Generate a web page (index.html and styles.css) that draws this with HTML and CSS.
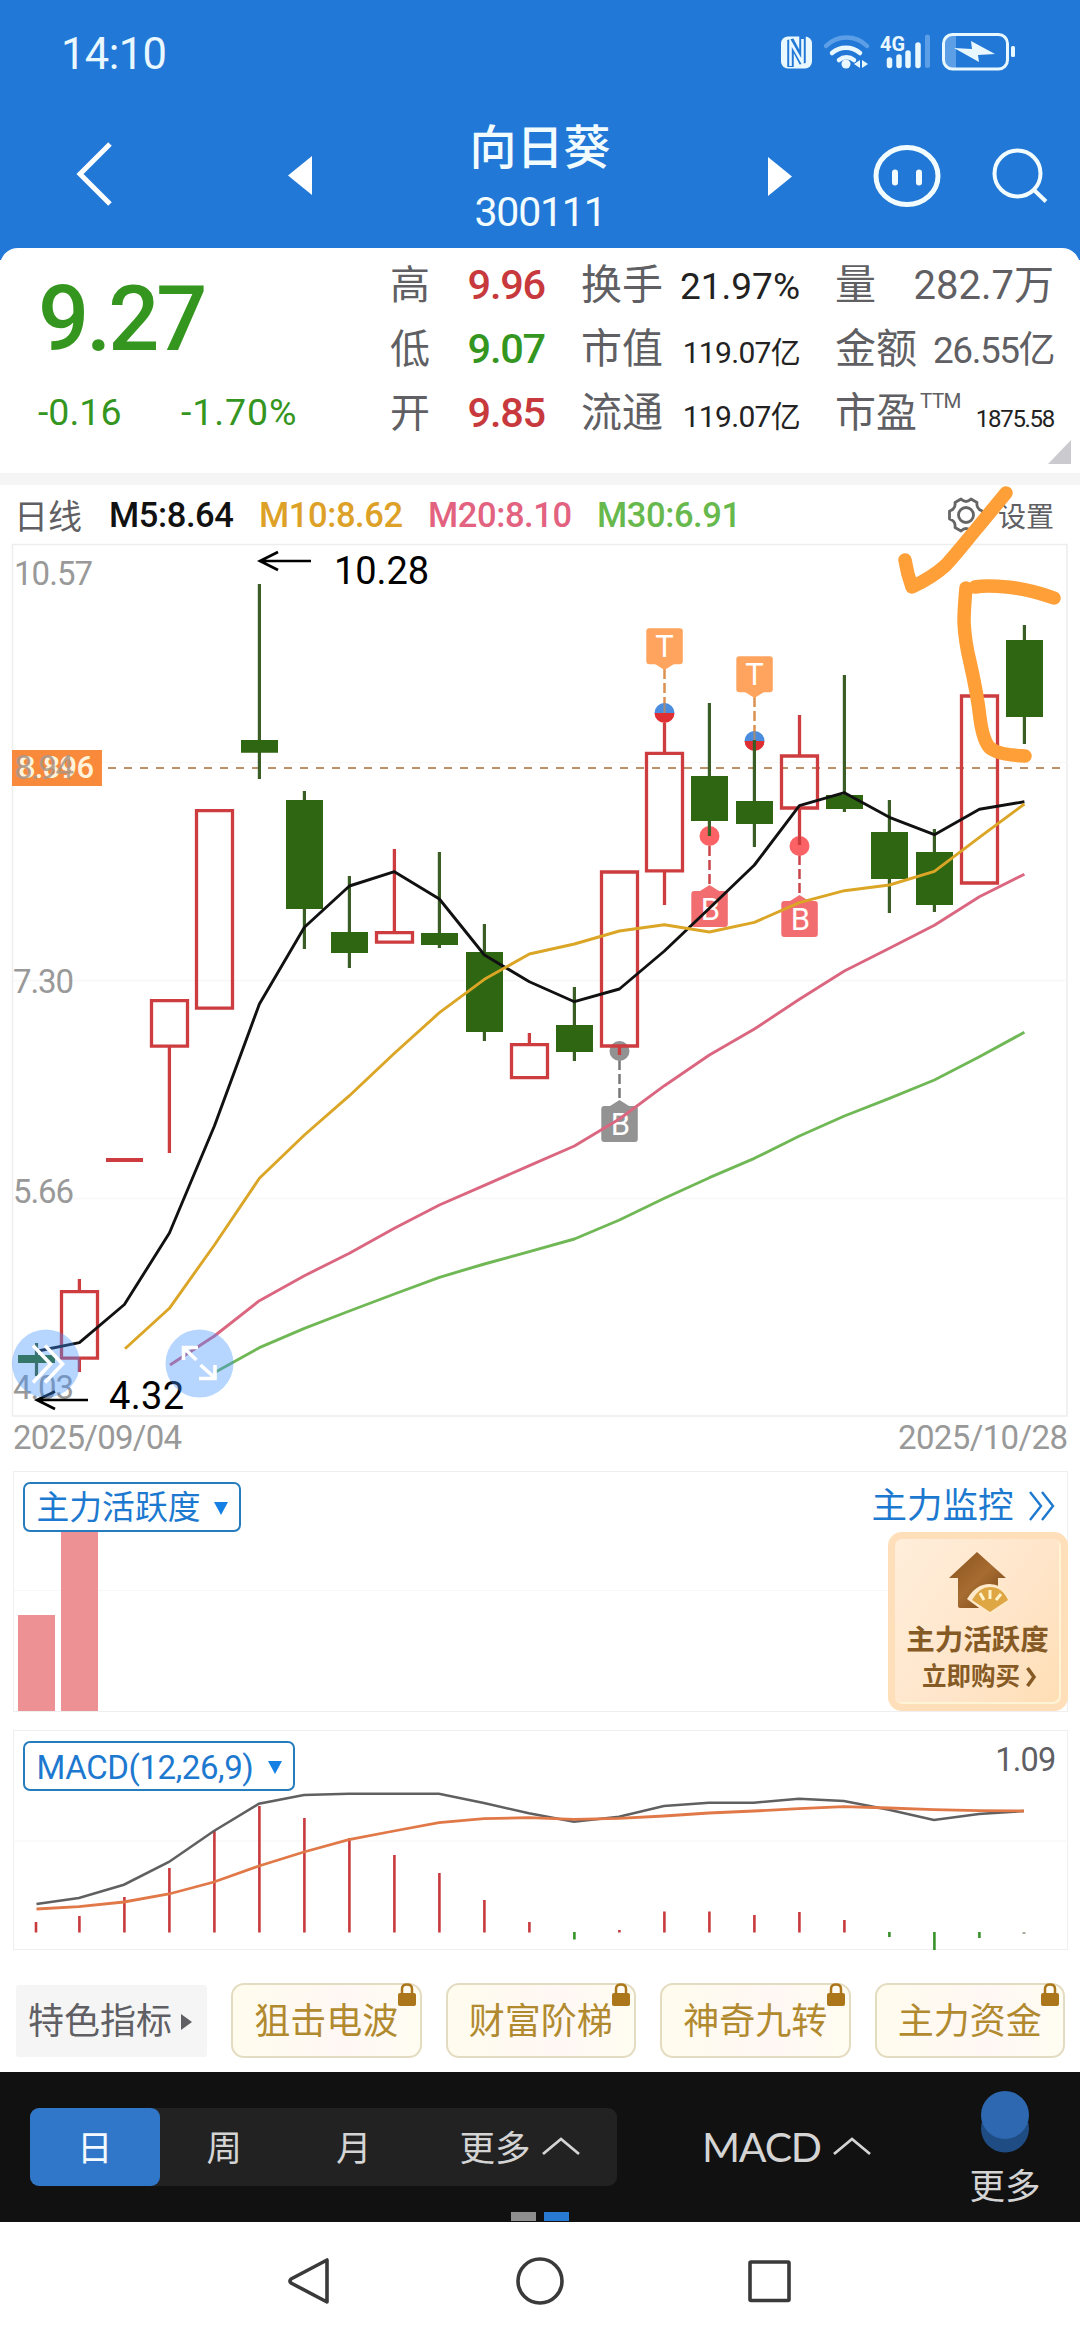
FILE: index.html
```html
<!DOCTYPE html>
<html lang="zh-CN">
<head>
<meta charset="utf-8">
<title>向日葵 300111</title>
<link rel="stylesheet" href="styles.css">
</head>
<body>
<div class="screen">
  <header class="top">
    <div class="status">
      <span class="clock">14:10</span>
      <svg class="status-icons" width="240" height="50" viewBox="776 28 240 50">
        <rect x="781" y="36.500" width="31" height="32" rx="7" fill="#e9f7ff"/>
        <path d="M790.500 67V40L802.500 63V36" fill="none" stroke="#2178d6" stroke-width="6.500"/>
        <path d="M790.500 66V42L802.500 63V39" fill="none" stroke="#e9f7ff" stroke-width="2.600"/>
        <path d="M826 46A29 29 0 0 1 867 46" fill="none" stroke="#5c9fe6" stroke-width="4.500" stroke-linecap="round"/>
        <path d="M832 53A21 21 0 0 1 860 53M839 60A12 12 0 0 1 854 60" fill="none" stroke="#e9f7ff" stroke-width="4.500" stroke-linecap="round"/>
        <circle cx="846" cy="64" r="4.500" fill="#e9f7ff"/>
        <path d="M860 60V68L854 64ZM862 60V68L868 64Z" fill="#e9f7ff"/>
        <text x="880" y="51" class="net" textLength="25" lengthAdjust="spacingAndGlyphs">4G</text>
        <path d="M889.500 60V65.500M899 57V65.500M908 53V65.500M918 45V65.500" stroke="#e9f7ff" stroke-width="5.500" stroke-linecap="round"/>
        <path d="M927.500 37V65.500" stroke="#5c9fe6" stroke-width="5" stroke-linecap="round"/>
        <path d="M951 35H956V68H951Q944 68 944 61V42Q944 35 951 35Z" fill="#5c9fe6"/>
        <rect x="943.500" y="34.500" width="64" height="34.500" rx="9" fill="none" stroke="#e9f7ff" stroke-width="3"/>
        <path d="M954 48L972 49L971 41L995 54L978 55L979 62Z" fill="#e9f7ff"/>
        <rect x="1011" y="46" width="4" height="11" rx="1.500" fill="#e9f7ff"/>
      </svg>
    </div>
    <div class="titlebar">
      <svg class="bar-icons" width="330" height="100" viewBox="0 120 330 100">
        <path d="M110 144L80 174L110 204" fill="none" stroke="#fff" stroke-width="5"/>
        <path d="M312 156V195L288 175.500Z" fill="#fff"/>
      </svg>
      <div class="title"><div class="name">向日葵</div><div class="code">300111</div></div>
      <svg class="bar-icons" width="330" height="100" viewBox="750 120 330 100">
        <path d="M768 157V196L792 176.500Z" fill="#fff"/>
        <ellipse cx="907" cy="176" rx="31" ry="28.500" fill="none" stroke="#f2fcff" stroke-width="5"/>
        <path d="M895 172.500V182.500M919 172.500V182.500" stroke="#f2fcff" stroke-width="6" stroke-linecap="round"/>
        <circle cx="1017.500" cy="173.500" r="23" fill="none" stroke="#f2fcff" stroke-width="4"/>
        <path d="M1033.500 189.500L1046 201.500" stroke="#f2fcff" stroke-width="4"/>
      </svg>
    </div>
  </header>

  <section class="quote">
    <div class="price-box">
      <div class="price">9.27</div>
      <div class="change"><span class="delta">-0.16</span><span class="pct">-1.70%</span></div>
    </div>
    <dl class="stats col-a">
      <div><dt>高</dt><dd class="up">9.96</dd></div>
      <div><dt>低</dt><dd class="down">9.07</dd></div>
      <div><dt>开</dt><dd class="up">9.85</dd></div>
    </dl>
    <dl class="stats col-b">
      <div><dt>换手</dt><dd class="rate">21.97%</dd></div>
      <div><dt>市值</dt><dd>119.07亿</dd></div>
      <div><dt>流通</dt><dd>119.07亿</dd></div>
    </dl>
    <dl class="stats col-c">
      <div><dt>量</dt><dd class="vol">282.7万</dd></div>
      <div><dt>金额</dt><dd class="amount">26.55亿</dd></div>
      <div><dt>市盈<sup>TTM</sup></dt><dd class="pe">1875.58</dd></div>
    </dl>
    <span class="corner"></span>
  </section>

  <section class="ma-row">
    <span class="period">日线</span>
    <span class="ma m5">M5:8.64</span><span class="ma m10">M10:8.62</span><span class="ma m20">M20:8.10</span><span class="ma m30">M30:6.91</span>
    <span class="settings">
      <svg width="38" height="38" viewBox="-19 -19 38 38" fill="none" stroke="#666" stroke-width="2.800" stroke-linejoin="round">
        <path d="M-5 -16Q0 -11 5 -16L11 -12.500Q10 -6 16.500 -4V4Q10 6 11 12.500L5 16Q0 11 -5 16L-11 12.500Q-10 6 -16.500 4V-4Q-10 -6 -11 -12.500Z"/>
        <circle r="7.500"/>
      </svg>设置
    </span>
  </section>

  <section class="kline">
    <svg width="1080" height="922" viewBox="0 542 1080 922">
      <g fill="none" stroke="#ededed" stroke-width="1.500">
        <rect x="12.500" y="544.500" width="1054.500" height="871.500"/>
        <path stroke="#f7f7f7" d="M13 762.500H1067M13 980.500H1067M13 1198.500H1067"/>
      </g>
      <path d="M108 768H1062" stroke="#bd9068" stroke-width="2" stroke-dasharray="8 8"/>
      <rect x="12" y="750" width="90" height="36" fill="#f98a3c"/>
      <text class="tag-price" x="18" y="777.500" textLength="76">8.896</text>
      <g class="axis">
        <text x="14" y="585" textLength="79">10.57</text>
        <text x="14" y="779" textLength="60" class="faded">8.94</text>
        <text x="13" y="993" textLength="61">7.30</text>
        <text x="13" y="1203" textLength="61">5.66</text>
        <text x="13" y="1399" textLength="61">4.03</text>
        <text x="13" y="1449" textLength="169">2025/09/04</text>
        <text x="898" y="1449" textLength="170">2025/10/28</text>
      </g>
      <g class="marker-line">
        <path d="M664.500 669V713M754.500 697V741" stroke="#dc9150"/>
        <path d="M709.500 846V887M799.500 855V897" stroke="#c9444a"/>
        <path d="M619.500 1060V1102" stroke="#777"/>
      </g>
      <g>
        <path d="M654.500 713a10 10 0 0 1 20 0ZM744.500 741a10 10 0 0 1 20 0Z" fill="#4a8cdd"/>
        <path d="M654.500 713a10 10 0 0 0 20 0ZM744.500 741a10 10 0 0 0 20 0Z" fill="#e02f33"/>
        <circle cx="709.500" cy="836" r="10" fill="#fb6265"/>
        <circle cx="799.500" cy="846" r="10" fill="#fb6265"/>
        <circle cx="619.500" cy="1051" r="10" fill="#929292"/>
        <path d="M664.500 703V713M754.500 731V741" stroke="#a58b76" stroke-width="2"/>
      </g>
      <g class="candle-down">
        <path class="wick" d="M36.500 1343V1376M259.400 584V779M304.400 791V949M349.400 876V968M439.400 852V948M484.400 924V1041M574.400 987V1061M709.400 703V836M754.400 740V847M844.400 675V812M889.400 800V913M934.400 829V912M1024.400 625V744"/>
        <path class="fill" d="M18 1355h37v8h-37zM241 740h37v12.700h-37zM286 800h37v109h-37zM331 932h37v21h-37zM421 933h37v12h-37zM466 952h37v80h-37zM556 1025h37v27h-37zM691 776h37v45h-37zM736 801h37v23h-37zM826 795h37v14h-37zM871 832h37v47h-37zM916 852h37v53h-37zM1006 640h37v77h-37z"/>
      </g>
      <g class="candle-up">
        <path d="M79.400 1279V1291M79.400 1359V1372M169.400 1047V1153M394.400 849V932M529.400 1033V1044M664.500 723V753M664.500 871V905M799.500 715V755M799.500 809V845M619.500 1047V1055"/>
        <path d="M61.500 1291.700h36v66.500h-36zM151.500 1000.700h36v45.500h-36zM196.500 810.700h36v197.500h-36zM376.500 932.700h36v9.500h-36zM511.500 1044.700h36v33h-36zM601.500 872h36v174h-36zM646.500 753.300h36v117.500h-36zM781.500 756h36v52h-36zM961.500 696h36v187h-36z"/>
        <path stroke-width="4" d="M106 1160H143"/>
      </g>
      <g fill="#ffa45f"><rect x="646.300" y="628.300" width="36.500" height="36" rx="3"/><path d="M655 664H674L664.500 670Z"/><rect x="736.300" y="656.300" width="36.500" height="36" rx="3"/><path d="M745 692H764L754.500 698Z"/></g>
      <g fill="#f26d70"><rect x="691.300" y="891" width="36.500" height="36" rx="3"/><path d="M700 891H719L709.500 885Z"/><rect x="781.300" y="901" width="36.500" height="36" rx="3"/><path d="M790 901H809L799.500 895Z"/></g>
      <g fill="#939393"><rect x="601.300" y="1106" width="36.500" height="36" rx="3"/><path d="M610 1106H629L619.500 1100Z"/></g>
      <g class="mark">
        <text x="664.500" y="657">T</text><text x="754.500" y="685">T</text>
        <text x="710.500" y="920">B</text><text x="800.500" y="930">B</text><text x="620.500" y="1135">B</text>
      </g>
      <g class="ma-lines">
        <polyline stroke="#111" points="38,1351 79.400,1342.700 124.400,1304.500 169.400,1233 214.400,1126 259.400,1004 304.400,927.300 349.400,886 394.400,871.700 439.400,899 484.400,955 529.400,981.700 574.400,1001.700 619.400,989 664.400,951 709.400,908.300 754.400,865 799.400,805.700 844.400,792.700 889.400,817.300 934.400,834.700 979.400,809.300 1024.400,801.700"/>
        <polyline stroke="#dba526" points="125,1348.700 169.400,1308.300 214.400,1245 259.400,1178.300 304.400,1135 349.400,1095.700 394.400,1053.300 439.400,1012.700 484.400,979.300 529.400,954 574.400,944 619.400,931 664.400,924.700 709.400,932 754.400,922.300 799.400,902.700 844.400,890.700 889.400,885 934.400,871.300 979.400,837.300 1024.400,804"/>
        <polyline stroke="#db6680" points="170,1365 214.400,1336 259.400,1300.700 304.400,1275.700 349.400,1253.300 394.400,1228.300 439.400,1205 484.400,1185.300 529.400,1165.700 574.400,1146 619.400,1119 664.400,1085.700 709.400,1055 754.400,1029 799.400,999.300 844.400,971 889.400,948.300 934.400,925.300 979.400,896.700 1024.400,874.300"/>
        <polyline stroke="#70b855" points="216,1371.700 259.400,1347.700 304.400,1328.300 349.400,1311 394.400,1294 439.400,1277.300 484.400,1264 529.400,1251.700 574.400,1239 619.400,1220 664.400,1198.300 709.400,1177.700 754.400,1158.300 799.400,1136 844.400,1116 889.400,1098.300 934.400,1080 979.400,1056.700 1024.400,1032.300"/>
      </g>
      <g fill="none" stroke="#000" stroke-width="2.700">
        <path d="M311 561H260M278 552L260 561L278 570M88 1400H37M55 1391.500L37 1400L55 1409"/>
      </g>
      <text class="extreme" x="334" y="584" textLength="95">10.28</text>
      <text class="extreme" x="109" y="1408.500" textLength="75">4.32</text>
      <circle cx="46" cy="1363.500" r="34" fill="#3e91ff" opacity=".38"/>
      <circle cx="199.500" cy="1363.500" r="34" fill="#3e91ff" opacity=".38"/>
      <g fill="none" stroke="#fff" stroke-width="3.600">
        <path d="M33 1345.500L50.500 1364L33 1382.500M45 1345.500L62.500 1364L45 1382.500"/>
        <path d="M198 1347.500H183.500V1360M184 1348L196.500 1360M200.500 1365L215 1378M199 1378.500H215V1365"/>
      </g>
    </svg>
  </section>

  <section class="panel activity">
    <div class="panel-head">
      <button class="picker">主力活跃度<i class="tri"></i></button>
      <a class="monitor">主力监控<svg width="28" height="30" viewBox="0 0 28 30" fill="none" stroke="#1d79cf" stroke-width="2.400"><path d="M2 1L13 15L2 29M14 1L25 15L14 29"/></svg></a>
    </div>
    <div class="panel-body">
      <div class="bar" style="height:96px"></div>
      <div class="bar" style="height:179px"></div>
      <a class="promo">
        <svg width="64" height="64" viewBox="0 0 64 64">
          <defs><linearGradient id="roof" x1="0" y1="0" x2="1" y2="1"><stop offset="0" stop-color="#89501c"/><stop offset=".5" stop-color="#a66c31"/><stop offset="1" stop-color="#744414"/></linearGradient></defs>
          <path d="M31 2L60 28H52V58H14Q12 58 12 56V28H3Z" fill="url(#roof)"/>
          <path d="M21 49Q30 34 43.500 34Q57 34 67 49L44 66Z" fill="#ffe9cb"/>
          <path d="M26 50Q33 37 44 37Q56 37 62 50L44 62Z" fill="#dfa644"/>
          <path d="M44 49V40M38 50L34 43M50 50L55 44" stroke="#fff3c9" stroke-width="3"/>
        </svg>
        <b>主力活跃度</b>
        <span>立即购买<svg width="11" height="20" viewBox="0 0 11 20"><path d="M1.500 1L8 10L1.500 19" fill="none" stroke="#865a24" stroke-width="3.500"/></svg></span>
      </a>
    </div>
  </section>

  <section class="panel macd">
    <div class="panel-head"><button class="picker latin">MACD(12,26,9)<i class="tri"></i></button><span class="max">1.09</span></div>
    <svg class="macd-plot" width="1054" height="168" viewBox="12.500 1781 1054 168">
      <path d="M13 1840H1067" stroke="#f8f8f8" stroke-width="1.500"/>
      <path stroke="#c83a3d" stroke-width="2.600" d="M36.500 1931.500V1921M79.900 1931.500V1915M124.900 1931.500V1896M169.900 1931.500V1867M214.900 1931.500V1830M259.900 1931.500V1805M304.900 1931.500V1817M349.900 1931.500V1837M394.900 1931.500V1854M439.900 1931.500V1872M484.900 1931.500V1899M529.900 1931.500V1921M619.900 1931.500V1929M664.900 1931.500V1910.500M709.900 1931.500V1910.500M754.900 1931.500V1914M799.900 1931.500V1911M844.900 1931.500V1919"/>
      <path stroke="#369229" stroke-width="2.600" d="M574.900 1931V1938.500M889.900 1931V1936M934.900 1931V1949M979.900 1931V1937"/>
      <path stroke="#a0b09a" stroke-width="3" d="M1024.500 1931V1933"/>
      <polyline fill="none" stroke="#606060" stroke-width="2.600" points="37,1903 79.400,1897 124.400,1883.700 169.400,1861 214.400,1830 259.400,1802.700 304.400,1794 349.400,1792.700 394.400,1792.700 439.400,1792.700 484.400,1802 529.400,1812.300 574.400,1820.700 619.400,1815.700 664.400,1805 709.400,1801.700 754.400,1801.700 799.400,1797.700 844.400,1800 889.400,1808.700 934.400,1819 979.400,1813 1024.400,1810"/>
      <polyline fill="none" stroke="#e07848" stroke-width="2.800" points="37,1908 79.400,1905.700 124.400,1901 169.400,1893 214.400,1881 259.400,1865 304.400,1851 349.400,1838.700 394.400,1830 439.400,1821.700 484.400,1817.700 529.400,1816.700 574.400,1818.300 619.400,1817.300 664.400,1815 709.400,1812 754.400,1810 799.400,1807.700 844.400,1805.700 889.400,1807 934.400,1808.700 979.400,1809.700 1024.400,1810"/>
    </svg>
  </section>

  <nav class="indicators">
    <span class="chip plain">特色指标<i></i></span>
    <span class="chip">狙击电波<svg class="lock" width="18" height="23" viewBox="0 0 18 23"><path d="M4 10V6Q4 1.500 9 1.500T14 6V10" fill="none" stroke="#ac761b" stroke-width="2.500"/><rect y="10" width="18" height="13" rx="2" fill="#ac761b"/></svg></span>
    <span class="chip">财富阶梯<svg class="lock" width="18" height="23" viewBox="0 0 18 23"><path d="M4 10V6Q4 1.500 9 1.500T14 6V10" fill="none" stroke="#ac761b" stroke-width="2.500"/><rect y="10" width="18" height="13" rx="2" fill="#ac761b"/></svg></span>
    <span class="chip">神奇九转<svg class="lock" width="18" height="23" viewBox="0 0 18 23"><path d="M4 10V6Q4 1.500 9 1.500T14 6V10" fill="none" stroke="#ac761b" stroke-width="2.500"/><rect y="10" width="18" height="13" rx="2" fill="#ac761b"/></svg></span>
    <span class="chip">主力资金<svg class="lock" width="18" height="23" viewBox="0 0 18 23"><path d="M4 10V6Q4 1.500 9 1.500T14 6V10" fill="none" stroke="#ac761b" stroke-width="2.500"/><rect y="10" width="18" height="13" rx="2" fill="#ac761b"/></svg></span>
  </nav>

  <footer class="toolbar">
    <div class="segments">
      <span class="seg active">日</span><span class="seg">周</span><span class="seg">月</span>
      <span class="seg wide">更多<svg width="40" height="20" viewBox="0 0 40 20"><path d="M2 18L20 3L38 18" fill="none" stroke="#d4d4d4" stroke-width="2.800"/></svg></span>
    </div>
    <span class="indicator-pick">MACD<svg width="40" height="20" viewBox="0 0 40 20"><path d="M2 18L20 3L38 18" fill="none" stroke="#d4d4d4" stroke-width="2.800"/></svg></span>
    <div class="more">
      <svg width="50" height="64" viewBox="0 0 50 64"><circle cx="25" cy="38.500" r="24" fill="#1f4c82"/><circle cx="25" cy="25" r="24" fill="#2d68b0"/></svg>
      <span>更多</span>
    </div>
    <div class="pager"><i></i><i class="on"></i></div>
  </footer>

  <div class="sysnav">
    <svg width="1080" height="118" viewBox="0 2222 1080 118" fill="none" stroke="#3a3a3a" stroke-width="3.600" stroke-linejoin="round">
      <path d="M327 2260V2302L291 2283Q289 2281 291 2279Z"/>
      <circle cx="540" cy="2281" r="22"/>
      <rect x="750" y="2262" width="39" height="38.500" rx="1"/>
    </svg>
  </div>

  <svg class="ink" width="180" height="290" viewBox="890 480 180 290" fill="none" stroke="#ff9f38" stroke-width="13.500" stroke-linecap="round" stroke-linejoin="round">
    <path d="M905 560Q907 573 912 587Q933 577 946 565C959 551 967 540 978 527L1006 493"/>
    <path d="M1054 598Q1029 589 1007 587Q986 585 975 587"/>
    <path d="M966 588Q964 610 964 622Q965 642 970 662C975 684 978 700 980 718Q983 741 990 748Q999 755 1025 756"/>
  </svg>
</div>
</body>
</html>
```
FILE: styles.css
```css
* { box-sizing: border-box; }
body { margin: 0; background: #fff; font-family: Roboto, "Noto Sans CJK SC", sans-serif; }
dl, dd { margin: 0; }
i { font-style: normal; }
button { font: inherit; }
svg { display: block; flex: none; }

.screen { position: relative; width: 1080px; height: 2340px; overflow: hidden; display: flex; flex-direction: column; }

.top { height: 260px; flex: none; background: #2178d6; color: #f2fcff; }
.status { height: 100px; padding: 28px 64px 0 61px; display: flex; justify-content: space-between; align-items: flex-start; }
.clock { font-size: 43.500px; line-height: 53px; letter-spacing: -.6px; color: #e9f7ff; }
.net { font-size: 20px; font-weight: 700; fill: #e9f7ff; }
.titlebar { height: 148px; display: flex; justify-content: space-between; }
.bar-icons { margin-top: 20px; }
.title { flex: 1; text-align: center; padding-top: 18px; }
.name { font-size: 47px; line-height: 60px; font-weight: 500; }
.code { font-size: 41px; line-height: 46px; letter-spacing: -1.2px; margin-top: 11px; }

.quote { position: relative; flex: none; height: 225px; margin-top: -12px; background: #fff; border-radius: 18px 18px 0 0; display: flex; color: #5f5f64; }
.price-box { width: 390px; padding-left: 38px; color: #35961f; }
.price { font-size: 90px; line-height: 100px; font-weight: 500; letter-spacing: -3px; margin-top: 22px; }
.change { display: flex; font-size: 37.500px; line-height: 44px; margin-top: 20px; }
.delta { width: 143px; }
.pct { letter-spacing: .9px; }
.stats { padding-top: 8px; }
.stats div { display: flex; justify-content: space-between; align-items: baseline; height: 64px; white-space: nowrap; }
.stats dt { font-size: 41px; line-height: 58px; }
.stats dd { line-height: 58px; font-size: 30px; color: #222; letter-spacing: -.7px; }
.col-a { width: 155px; }
.col-a dt { font-size: 40px; }
.col-a dd { font-size: 41.500px; letter-spacing: -1.2px; font-weight: 500; }
.col-a .up { color: #c7393d; }
.col-a .down { color: #35961f; }
.col-b { width: 219px; margin-left: 36px; }
.col-b .rate { font-size: 37px; letter-spacing: 0; }
.col-c { width: 219px; margin-left: 35px; }
.col-c dd { color: #5f5f64; }
.col-c .vol { font-size: 40px; letter-spacing: 0; }
.col-c .amount { font-size: 37px; letter-spacing: -1.500px; }
.col-c .pe { font-size: 24px; letter-spacing: -1.300px; color: #222; }
.col-c sup { font-size: 20.500px; line-height: 0; vertical-align: 19px; margin-left: 3px; letter-spacing: -.5px; }
.corner { position: absolute; right: 9px; bottom: 9px; border-left: 23px solid transparent; border-bottom: 24px solid #cbcacf; }

.ma-row { flex: none; height: 69px; border-top: 12px solid #f5f5f5; display: flex; align-items: center; padding: 2px 26px 0 14px; font-size: 34px; color: #5f5f64; }
.period { width: 95px; }
.ma { font-weight: 500; font-size: 34.500px; letter-spacing: -.4px; }
.m5 { width: 150px; color: #111; }
.m10 { width: 169px; color: #dda127; }
.m20 { width: 169px; color: #e2627f; }
.m30 { color: #68b94d; }
.settings { margin-left: auto; display: flex; align-items: center; gap: 13px; font-size: 28px; }

.kline { flex: none; height: 922px; }
.kline text { white-space: pre; }
.axis { font-size: 33px; fill: #999; }
.axis .faded { fill: #a99686; opacity: .85; }
.tag-price { font-size: 31px; font-weight: 500; fill: #fff3dc; }
.mark { font-size: 31px; fill: #fff; text-anchor: middle; }
.extreme { font-size: 38px; fill: #000; }
.marker-line { fill: none; stroke-width: 2.500; stroke-dasharray: 10 4; }
.candle-down .wick { stroke: #3a5e25; stroke-width: 3.200; }
.candle-down .fill { fill: #2f6611; }
.candle-up { fill: none; stroke: #cd3d40; stroke-width: 3.300; }
.ma-lines { fill: none; }
.ma-lines polyline { stroke-width: 2.900; stroke-linejoin: round; }

.panel { flex: none; margin: 0 12.500px; border: 1.500px solid #efefef; }
.panel-head { display: flex; justify-content: space-between; align-items: center; }
.picker { width: 218px; height: 50px; padding: 0 11px 0 12px; background: #fff; border: 2px solid #267dbd; border-radius: 7px; color: #1d79cf; font-size: 32.800px; line-height: 44px; display: flex; align-items: center; justify-content: space-between; white-space: nowrap; }
.latin { width: 272px; font-size: 33px; letter-spacing: -.4px; padding-top: 3px; }
.tri { border: 7px solid transparent; border-top: 13px solid #1480e4; border-bottom: 0; }
.activity { height: 241px; margin-top: 7px; }
.activity .panel-head { padding: 10px 11px 0 9px; }
.activity .picker { padding-top: 2px; }
.monitor { display: flex; align-items: center; gap: 14px; color: #1d79cf; font-size: 35.500px; line-height: 50px; margin-top: -2px; }
.panel-body { height: 179px; margin-right: -1px; display: flex; align-items: flex-end; gap: 6px; padding-left: 4px; background: linear-gradient(#f7f7f7, #f7f7f7) 0 58px / 100% 1px no-repeat; }
.bar { width: 37px; background: #ee9194; }
.promo { margin-left: auto; width: 180px; height: 179px; border-radius: 14px; border: 7px solid #ffdfba; background: linear-gradient(125deg, #ffeedb, #ffe5c9 60%, #ffdeb4); color: #865a24; display: flex; flex-direction: column; align-items: center; padding-top: 11px; box-shadow: inset -2px -2px 0 #fff3d5; }
.promo b { font-size: 28.500px; line-height: 34px; margin-top: 10px; }
.promo span { display: flex; align-items: center; gap: 6px; font-size: 24.500px; line-height: 36px; font-weight: 700; margin-left: 4px; margin-top: 1px; }

.macd { height: 220px; margin-top: 18px; }
.macd .panel-head { padding: 10px 11px 0 9px; height: 60px; }
.max { font-size: 32.500px; line-height: 36px; letter-spacing: -.8px; color: #5f5f64; margin-top: -13px; }
.macd-plot { margin: -9.500px 0 0 -1.500px; position: relative; }

.indicators { flex: none; display: flex; gap: 24px; padding: 33px 15px 15px 16px; height: 122px; }
.chip { position: relative; flex: 1; height: 75px; border: 2px solid #e4dcc0; border-radius: 13px; background: linear-gradient(90deg, #fffcee, #fff7f4 60%, #fffdf2); color: #b18a30; font-size: 36px; line-height: 75px; display: flex; justify-content: center; white-space: nowrap; }
.plain { flex: 0 0 191px; align-items: center; border: 0; border-radius: 3px; background: #f5f5f5; color: #5f5f64; gap: 9px; height: 72px; line-height: 72px; margin-top: 2px; padding: 1px 3px 0 0; }
.plain i { border: 8px solid transparent; border-left: 11px solid #5f5f64; border-right: 0; }
.lock { position: absolute; right: 4px; top: -2px; }

.toolbar { position: relative; flex: none; height: 150px; background: #111; display: flex; color: #d4d4d4; font-size: 35.500px; }
.segments { margin: 36px 0 0 30px; width: 587px; height: 78px; background: #222; border-radius: 9px; display: flex; }
.seg { width: 129.500px; padding-bottom: 3px; display: flex; align-items: center; justify-content: center; }
.active { background: #3177c9; border-radius: 9px; color: #f4faff; }
.wide { width: auto; margin-left: 41px; gap: 10px; }
.indicator-pick { margin-left: 85px; height: 76px; margin-top: 36px; display: flex; align-items: center; gap: 11px; font-family: Lato, sans-serif; font-size: 41px; letter-spacing: -1.2px; }
.more { margin-left: auto; margin-right: 30px; width: 90px; display: flex; flex-direction: column; align-items: center; padding-top: 18px; }
.more span { line-height: 44px; margin-top: 11px; }
.pager { position: absolute; left: 511px; bottom: 1px; display: flex; gap: 8px; }
.pager i { width: 25px; height: 9px; background: #8e8e8e; }
.pager .on { background: #2879d2; }

.sysnav { flex: none; height: 118px; }
.ink { position: absolute; left: 890px; top: 480px; }
```
